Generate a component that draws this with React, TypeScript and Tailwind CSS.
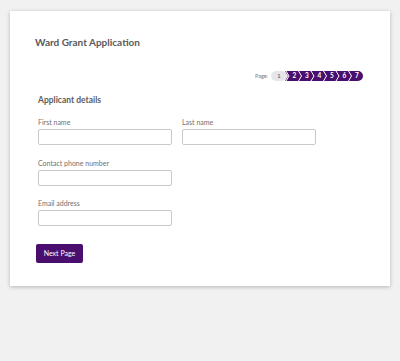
import React from 'react'

const font = { fontFamily: 'Lato, "Open Sans", Arial, sans-serif' }

const Stepper: React.FC = () => {
  const pages = [2, 3, 4, 5, 6, 7]
  return (
    <svg width="93" height="10" viewBox="0 0 93 10" className="block">
      <rect x="0" y="0" width="16" height="10" rx="5" fill="#e6e6ea" />
      <path d="M14 0 H87 A5 5 0 0 1 87 10 H14 L17 5 Z" fill="#4a0e6e" />
      {pages.slice(1).map((p, i) => {
        const x = 16 + (i + 1) * 12.5
        return <path key={p} d={`M${x - 1} 0 L${x + 2} 5 L${x - 1} 10`} stroke="#fff" strokeWidth="1" fill="none" />
      })}
      <path d="M15 0 L18 5 L15 10" stroke="#fff" strokeWidth="1" fill="none" />
      <text x="8" y="7.3" fontSize="6.5" textAnchor="middle" fill="#5a5a66" style={font}>1</text>
      {pages.map((p, i) => (
        <text key={p} x={23.5 + i * 12.5} y="7.3" fontSize="6.5" fontWeight="700" textAnchor="middle" fill="#fff" style={font}>
          {p}
        </text>
      ))}
    </svg>
  )
}

const Field: React.FC<{ label: string }> = ({ label }) => (
  <div className="flex flex-col w-[134px]">
    <label className="text-[7px] leading-[10px] text-[#707070]">{label}</label>
    <input className="mt-[2px] h-[16px] w-[134px] rounded-[2px] border border-[#c9c9c9] bg-white outline-none" />
  </div>
)

export default function App() {
  return (
    <div className="min-h-[361px] bg-[#f1f1f1] pt-[11px] px-[10px]" style={font}>
      <div className="w-[380px] h-[275px] bg-white shadow-[0_1px_4px_rgba(0,0,0,0.25)] pl-[25px] pr-[26px] pt-[24px]">
        <h1 className="text-[10px] leading-[14px] font-bold text-[#5a5a5a]">Ward Grant Application</h1>
        <div className="mt-[22px] flex items-center justify-end gap-[3px]">
          <span className="text-[5.5px] text-[#777]">Page:</span>
          <Stepper />
        </div>
        <div className="ml-[3px]">
          <h2 className="mt-[13px] text-[8.5px] leading-[12px] font-bold text-[#5c5c5c]">Applicant details</h2>
          <div className="mt-[11px] flex gap-[10px]">
            <Field label="First name" />
            <Field label="Last name" />
          </div>
          <div className="mt-[13px]">
            <Field label="Contact phone number" />
          </div>
          <div className="mt-[12px]">
            <Field label="Email address" />
          </div>
          <button className="mt-[18px] -ml-[2px] h-[19px] w-[47px] rounded-[2px] bg-[#4a0e6e] text-[7px] text-white">
            Next Page
          </button>
        </div>
      </div>
    </div>
  )
}
